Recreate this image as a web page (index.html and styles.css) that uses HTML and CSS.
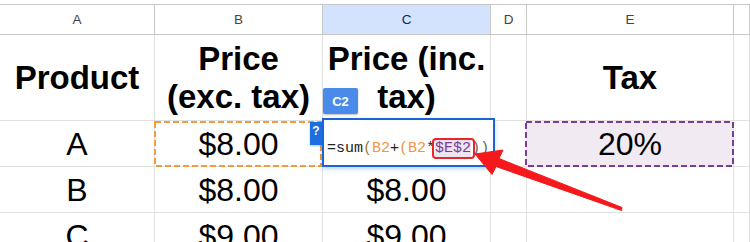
FILE: index.html
```html
<!DOCTYPE html>
<html lang="en">
<head>
    <meta charset="UTF-8">
    <title>Price with tax</title>
    <link rel="stylesheet" href="styles.css">
</head>
<body>
    <div class="wrap">
        <div class="sheet">
            <!-- column headers -->
            <div class="col-head">A</div>
            <div class="col-head">B</div>
            <div class="col-head active">C</div>
            <div class="col-head">D</div>
            <div class="col-head">E</div>
            <div class="col-head"></div>

            <!-- row 1 -->
            <div class="cell bold">Product</div>
            <div class="cell bold">Price<br>(exc. tax)</div>
            <div class="cell bold">Price (inc. tax)</div>
            <div class="cell"></div>
            <div class="cell bold">Tax</div>
            <div class="cell"></div>

            <!-- row 2 -->
            <div class="cell">A</div>
            <div class="cell">$8.00</div>
            <div class="cell"></div>
            <div class="cell"></div>
            <div class="cell tax-cell">20%</div>
            <div class="cell"></div>

            <!-- row 3 -->
            <div class="cell">B</div>
            <div class="cell">$8.00</div>
            <div class="cell">$8.00</div>
            <div class="cell"></div>
            <div class="cell"></div>
            <div class="cell"></div>

            <!-- row 4 -->
            <div class="cell">C</div>
            <div class="cell">$9.00</div>
            <div class="cell">$9.00</div>
            <div class="cell"></div>
            <div class="cell"></div>
            <div class="cell"></div>
        </div>

        <!-- range highlights -->
        <svg class="range range-b" width="168" height="46">
            <rect x="1" y="1" width="166" height="44" fill="none" stroke="#f7993c" stroke-width="2" stroke-dasharray="6 3"/>
        </svg>
        <svg class="range range-e" width="209" height="46">
            <rect x="1" y="1" width="207" height="44" fill="none" stroke="#7b3c97" stroke-width="2" stroke-dasharray="6 3"/>
        </svg>

        <!-- cell editor -->
        <div class="cell-label">C2</div>
        <div class="help-badge">?</div>
        <div class="editor">
            <span class="f-plain">=sum</span><span class="f-paren1">(</span><span class="f-ref1">B2</span><span class="f-plain">+</span><span class="f-paren2">(</span><span class="f-ref1">B2</span><span class="f-plain">*</span><span class="f-ref2">$E$2</span><span class="f-close">))</span>
        </div>

        <!-- annotation arrow -->
        <svg class="arrow" width="750" height="242">
            <polygon points="475,154 503,150 499,158.5 622,207.5 621.5,210.5 496,166.5 492,174.5" fill="#f5191c" stroke="#f5191c" stroke-width="1" stroke-linejoin="round"/>
        </svg>
    </div>
</body>
</html>
```

FILE: styles.css
```css
body {
    margin: 0;
    background: white;
    font-family: 'Liberation Sans', Arial, sans-serif;
    color: #000;
    overflow: hidden;
}
.wrap {
    position: relative;
    width: 750px;
    height: 242px;
    overflow: hidden;
}
.sheet {
    margin-top: 4px;
    display: grid;
    grid-template-columns: 155px 168px 168px 36px 207px 16px;
    grid-template-rows: 31px 86px 46px 46px 46px;
}
.col-head {
    display: flex;
    align-items: center;
    justify-content: center;
    border-top: 1px solid #c7c7c7;
    border-right: 1px solid #c7c7c7;
    border-bottom: 1px solid #c7c7c7;
    font-size: 13.5px;
    color: #444;
    box-sizing: border-box;
}
.col-head.active {
    background-color: #d3e3fd;
    color: #0b2a5c;
}
.cell {
    display: flex;
    align-items: center;
    justify-content: center;
    text-align: center;
    border-right: 1px solid #e1e1e1;
    border-bottom: 1px solid #e1e1e1;
    font-size: 32px;
    line-height: 38px;
    box-sizing: border-box;
}
.bold {
    font-weight: bold;
    font-size: 33px;
}
.tax-cell {
    background-color: #f1eaf3;
}

/* dashed ranges */
.range {
    position: absolute;
    top: 121px;
}
.range-b {
    left: 154px;
}
.range-e {
    left: 525px;
}

/* editor for C2 */
.cell-label {
    position: absolute;
    left: 323px;
    top: 88px;
    width: 35px;
    height: 26px;
    background-color: #4a8bea;
    color: white;
    font-size: 13px;
    font-weight: bold;
    display: flex;
    align-items: center;
    justify-content: center;
    border-radius: 2px;
    box-shadow: 0 1px 2px rgba(0, 0, 0, 0.25);
}
.help-badge {
    position: absolute;
    left: 310px;
    top: 122px;
    width: 12px;
    height: 23px;
    background-color: #1d6fe0;
    color: white;
    font-size: 12px;
    font-weight: bold;
    text-align: center;
    line-height: 18px;
    box-shadow: 0 1px 2px rgba(26, 115, 232, 0.4);
}
.editor {
    position: absolute;
    left: 322px;
    top: 118px;
    width: 173px;
    height: 49px;
    box-sizing: border-box;
    border: 2px solid #1a64d6;
    background: white;
    padding: 20px 0 0 3px;
    font-family: 'Liberation Mono', 'Courier New', monospace;
    font-size: 15px;
    line-height: 17px;
    white-space: nowrap;
    box-shadow: 0 2px 4px rgba(26, 115, 232, 0.3);
}
.f-plain {
    color: #222;
}
.f-paren1 {
    color: #a07a32;
}
.f-paren2 {
    color: #e8973e;
}
.f-ref1 {
    color: #f6953f;
}
.f-ref2 {
    position: relative;
    color: #7b3c97;
    background-color: #ede4ef;
}
.f-ref2::after {
    content: "";
    position: absolute;
    left: -3px;
    right: -4px;
    top: -2px;
    bottom: -2px;
    border: 2px solid #e8262b;
    border-radius: 4px;
}
.f-close {
    color: #666;
}

.arrow {
    position: absolute;
    left: 0;
    top: 0;
    pointer-events: none;
}
```
